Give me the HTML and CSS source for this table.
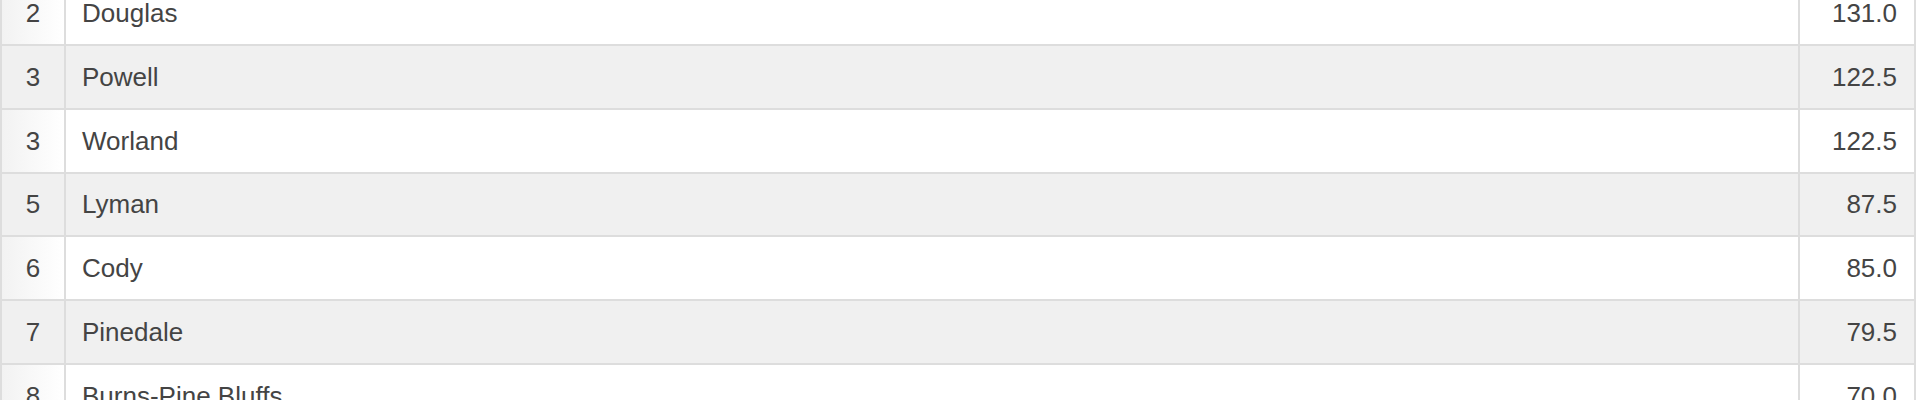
FILE: index.html
```html
<!DOCTYPE html>
<html lang="en">
<head>
<meta charset="utf-8">
<title>Standings</title>
<link rel="stylesheet" href="styles.css">
</head>
<body>
<div class="board">
  <table class="standings">
    <colgroup>
      <col class="col-rank">
      <col class="col-name">
      <col class="col-score">
    </colgroup>
    <tbody>
      <tr><td class="rank">2</td><td class="name">Douglas</td><td class="score">131.0</td></tr>
      <tr><td class="rank">3</td><td class="name">Powell</td><td class="score">122.5</td></tr>
      <tr><td class="rank">3</td><td class="name">Worland</td><td class="score">122.5</td></tr>
      <tr><td class="rank">5</td><td class="name">Lyman</td><td class="score">87.5</td></tr>
      <tr><td class="rank">6</td><td class="name">Cody</td><td class="score">85.0</td></tr>
      <tr><td class="rank">7</td><td class="name">Pinedale</td><td class="score">79.5</td></tr>
      <tr><td class="rank">8</td><td class="name">Burns-Pine Bluffs</td><td class="score">70.0</td></tr>
    </tbody>
  </table>
</div>
</body>
</html>
```

FILE: styles.css
```css
html, body {
  margin: 0;
  padding: 0;
  background: #fff;
  overflow: hidden;
}

.board {
  margin-top: -17.8px;
}

.standings {
  width: 1916px;
  table-layout: fixed;
  border-collapse: separate;
  border-spacing: 0;
  font-family: "Liberation Sans", Arial, sans-serif;
  font-size: 26px;
  color: #444;
}

.col-rank { width: 64px; }
.col-score { width: 118px; }

.standings td {
  box-sizing: border-box;
  height: 63.8px;
  padding: 0 16px;
  line-height: 30px;
  vertical-align: middle;
  border-left: 2px solid #dddddd;
  border-bottom: 2px solid #dddddd;
  background: #fff;
  white-space: nowrap;
}

.standings td.rank {
  text-align: center;
  padding: 0;
  background: linear-gradient(to right, #f2f2f2, #ffffff);
}

.standings td.score {
  text-align: right;
  padding-right: 17px;
  border-right: 2px solid #dddddd;
}

.standings tr:nth-child(even) td,
.standings tr:nth-child(even) td.rank {
  background: #f0f0f0;
}
```
